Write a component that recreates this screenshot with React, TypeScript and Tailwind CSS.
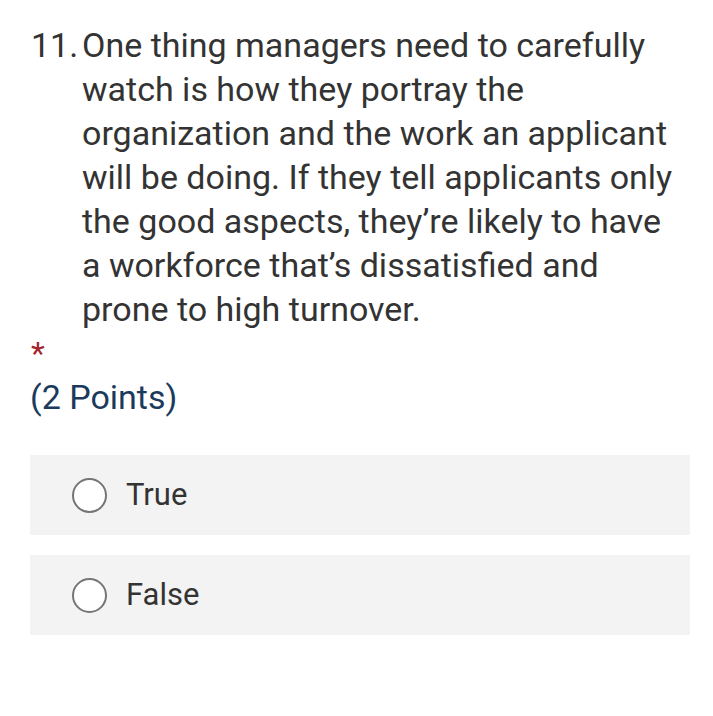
export default function App() {
  return (
    <div className="w-[713px] h-[716px] bg-white pl-[30px] pr-[23px] pt-[23px]" style={{ fontFamily: "Roboto, 'Noto Sans', sans-serif" }}>
      <div className="flex text-[34px] leading-[44px] text-[#333333] pr-[8px]">
        <span className="w-[52px] shrink-0 pl-[1px]">11.</span>
        <span>
          One thing managers need to carefully watch is how they portray the organization and the work an applicant will be doing. If they tell applicants only the good aspects, they’re likely to have a workforce that’s dissatisfied and prone to high turnover.
        </span>
      </div>
      <div className="text-[32px] leading-[44px] text-[#a4262c] pl-[1px]">*</div>
      <div className="text-[34px] leading-[44px] text-[#1b3a5c]">(2 Points)</div>
      <div className="mt-[36px] flex flex-col gap-[20px]">
        {["True", "False"].map((o) => (
          <div key={o} className="h-[80px] bg-[#f3f3f3] flex items-center pl-[42px] gap-[19px]">
            <span className="w-[35px] h-[35px] rounded-full border-2 border-[#757575] bg-white" />
            <span className="text-[31px] text-[#333333]">{o}</span>
          </div>
        ))}
      </div>
    </div>
  );
}
